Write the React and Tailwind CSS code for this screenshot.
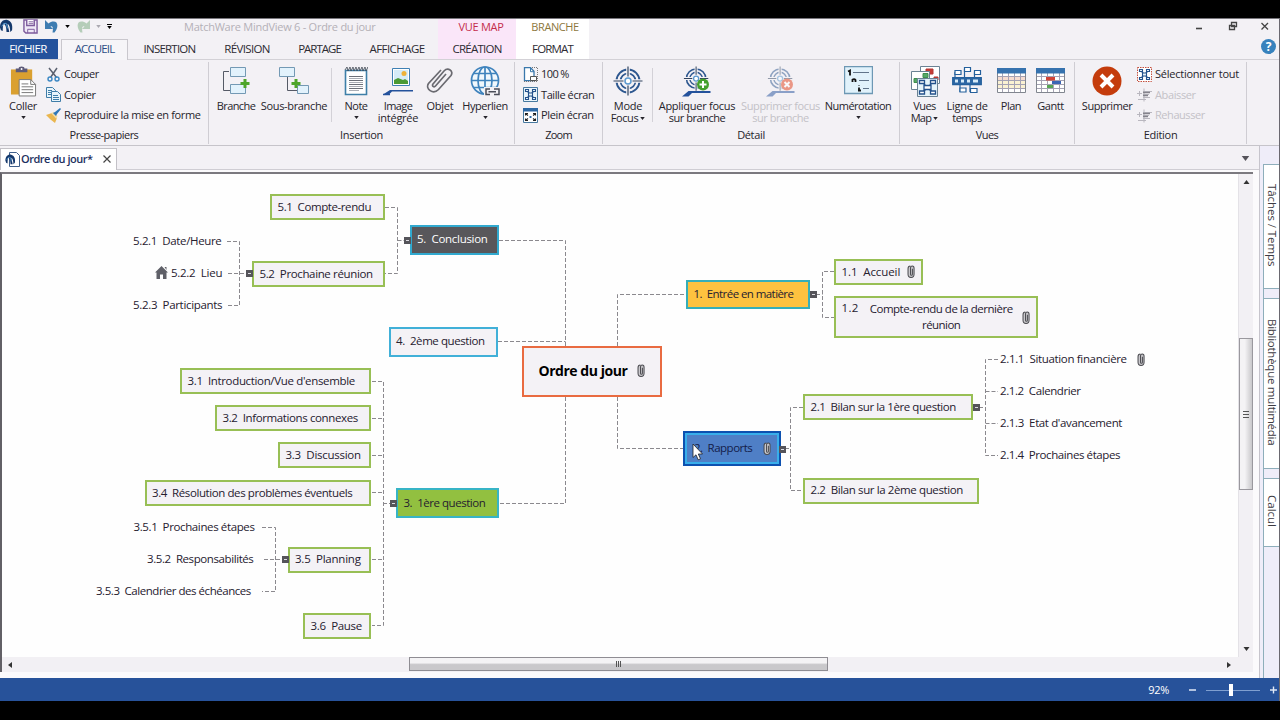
import { useLayoutEffect, useRef } from "react";
import clsx from "clsx";

// Text tracked so that it fills the given length (works for vertical text too)
function Txt({ w, className, children }) {
  const ref = useRef(null);

  useLayoutEffect(() => {
    const el = ref.current;
    el.style.letterSpacing = "0px";
    const length = Math.max(el.offsetWidth, el.offsetHeight);
    el.style.letterSpacing = `${(w - length) / children.length}px`;
  }, [w, children]);

  return (
    <span ref={ref} className={clsx("inline-block whitespace-pre", className)}>
      {children}
    </span>
  );
}

function Caret({ className }) {
  return (
    <svg viewBox="0 0 6 4" className={clsx("h-[3px] w-[5px] shrink-0", className)} fill="currentColor">
      <path d="M0 0h6L3 4z" />
    </svg>
  );
}

/* ---------- Icons ---------- */

function LogoIcon({ className }) {
  return (
    <svg viewBox="0 0 14 15" className={className}>
      <path d="M0 9C0 3 4 0 8 1c4 1 6 5 5 11l-2 2c0-5-1-8-3-9l2 9H7C7 9 6 6 4 5 3 7 3 10 3 13L1 12z" fill="#15386b" />
      <path d="M2 8c1-3 3-4 5-3l1 5" fill="none" stroke="#5aa0d8" strokeWidth="1" />
    </svg>
  );
}

function SaveIcon() {
  return (
    <svg viewBox="0 0 16 16" className="size-[15px]" fill="none" stroke="#7d5a9c" strokeWidth="1.5">
      <path d="M1 1h14v14H3l-2-2z" fill="#efe8f6" />
      <path d="M4 1v6h8V1" fill="#fff" />
      <path d="M5 15v-4h7v4M6 3h5M6 5h5" strokeWidth="1" />
    </svg>
  );
}

function UndoIcon({ className }) {
  return (
    <svg viewBox="0 0 13 13" className={className} fill="currentColor">
      <path d="M0 0v9h8L5.500 6.500c2-1 3 1 2 6l2 0c4-5 4-11-1-11-2 0-3 .5-5 2z" />
    </svg>
  );
}

function PasteIcon() {
  return (
    <svg viewBox="0 0 28 31" className="h-[31px] w-[27px]">
      <path d="M1 3h22v26H1z" fill="#daa030" />
      <path d="M6 2h3a3 2 0 0 1 6 0h3v4H6z" fill="#5d5a78" />
      <circle cx="12" cy="2.500" r="1" fill="#fff" />
      <path d="M9.500 13.500h12l5 5v12h-17z" fill="#fff" stroke="#777" />
      <path d="M21.500 13.500v5h5M12 18h7M12 21h12M12 24h12M12 27h12" fill="none" stroke="#777" />
    </svg>
  );
}

function CutIcon() {
  return (
    <svg viewBox="0 0 15 15" className="size-[15px]" fill="none">
      <path d="M3 1l7.500 9.500M11 1L4.500 10.500" stroke="#5b6170" strokeWidth="1.500" />
      <circle cx="4" cy="12" r="2" stroke="#3a87c4" strokeWidth="1.400" />
      <circle cx="11" cy="12" r="2" stroke="#3a87c4" strokeWidth="1.400" />
    </svg>
  );
}

function CopyIcon() {
  return (
    <svg viewBox="0 0 15 15" className="size-[15px]" fill="#e8f4fb" stroke="#3f7da8">
      <path d="M.5.500h6l3 3v7h-9z" />
      <path d="M2 3.500h4M2 5.500h4M2 7.500h3" />
      <path d="M5.500 4.500h6l3 3v7h-9z" />
      <path d="M7 8.500h5M7 10.500h6M7 12.500h6" />
    </svg>
  );
}

function BrushIcon() {
  return (
    <svg viewBox="0 0 15 15" className="size-[15px]">
      <path d="M0 7l6-2 5 5-2 5C6 13 3 10 0 7z" fill="#eab64e" />
      <path d="M5 5l3-1 3.500 4-1 3z" fill="#f3dca4" />
      <path d="M7 5l2-1 5-4 1 1-4 5-1 2z" fill="#2f78b8" />
    </svg>
  );
}

function BranchIcon() {
  return (
    <svg viewBox="0 0 28 30" className="h-[30px] w-[28px]" fill="#e2f2fc" stroke="#7399b4">
      <path d="M7 5.500H1.500v19H8" fill="none" stroke="#555a66" />
      <path d="M8.500 1.500h15v9h-15zM8.500 18.500h15v9h-15z" />
      <path d="M21.500 13h3v3h3v3h-3v3h-3v-3h-3v-3h3z" fill="#4ea52a" stroke="none" />
    </svg>
  );
}

function SubBranchIcon() {
  return (
    <svg viewBox="0 0 32 30" className="h-[30px] w-[32px]" fill="#e2f2fc" stroke="#7399b4">
      <path d="M9.500 10v14.500H19" fill="none" stroke="#555a66" />
      <path d="M1.500 1.500h15v9h-15zM19.500 19.500h11v8h-11z" />
      <path d="M16.500 13h3v3h3v3h-3v3h-3v-3h-3v-3h3z" fill="#4ea52a" stroke="none" />
    </svg>
  );
}

function NoteIcon() {
  return (
    <svg viewBox="0 0 24 30" className="h-[30px] w-[24px]">
      <path d="M1.500 4.500h21v24h-21z" fill="#fff" stroke="#3e7fa8" strokeWidth="1.600" />
      <path d="M1 4l2-3 1 4 2-4 1 4 2-4 1 4 2-4 1 4 2-4 1 4 2-4 1 4 2-4 1 4 2-4 1 3" fill="none" stroke="#3d4652" strokeWidth=".8" />
      <path d="M5 10.500h14M5 14.500h14M5 18.500h14M5 22.500h14" stroke="#6b6f78" strokeWidth="1.100" />
      <path d="M5 12.500h14M5 16.500h14M5 20.500h14M5 24.500h10" stroke="#aaadb5" strokeWidth="1" />
    </svg>
  );
}

function ImageIcon() {
  return (
    <svg viewBox="0 0 30 30" className="size-[30px]">
      <path d="M9.500 2.500h17v17h-17z" fill="#fff" stroke="#3f80b4" />
      <path d="M11 4h14v14H11z" fill="#d5ecf8" />
      <path d="M11 14l4-2 5 2 2-1 3 2v3H11z" fill="#4a9a35" />
      <circle cx="21" cy="7.500" r="2.500" fill="#edb23a" />
      <path d="M0 28.500l7-4.500h23v1.500H9l-3 3z" fill="#24529c" />
      <path d="M0 28.500h7" stroke="#24529c" strokeWidth="1.500" />
    </svg>
  );
}

function ClipIcon() {
  return (
    <svg viewBox="0 0 28 28" className="h-[28px] w-[28px]" fill="none" stroke="#6a6a70" strokeWidth="1.700">
      <path d="M20 8L9.500 20c-1.500 1.700-4 0-2.500-2L18 5c4-4 10 0 7 4.500L12.500 23.500C7 29-1 23 2.500 17.500L15 4" />
    </svg>
  );
}

function GlobeIcon() {
  return (
    <svg viewBox="0 0 30 31" className="h-[31px] w-[30px]" fill="none" stroke="#3f83bd" strokeWidth="1.700">
      <circle cx="15" cy="14.500" r="13.500" fill="#f0f8fd" />
      <ellipse cx="15" cy="14.500" rx="7" ry="13.500" />
      <path d="M15 1v27M2 14.500h26M4 7.500h22M4 21.500h22" />
      <path d="M14 21h16v10H14z" fill="#f3f1f5" stroke="none" />
      <path d="M20 23h-4v5.500h4M24 23h5v5.500h-5M18.500 25.700h7.500" stroke="#4b4e59" strokeWidth="1.500" />
    </svg>
  );
}

function PageIcon() {
  return (
    <svg viewBox="0 0 15 15" className="size-[15px]" fill="none">
      <path d="M1.500.700h6l3.500 3.500v9.500H1.500z" fill="#fff" stroke="#3a78ac" strokeWidth="1.300" />
      <path d="M7.500.700v4H11" stroke="#3a78ac" />
      <path d="M9 .500h5.500v14H1" stroke="#777" strokeDasharray="1 1" />
      <path d="M7.500 9.500h6v4h-6z" fill="#fff" stroke="#555" />
    </svg>
  );
}

function MiniMap() {
  return (
    <g fill="#e8f4fb" stroke="#24528c" strokeWidth="1.100">
      <path d="M4 4l7 7M11 4l-7 7" />
      <path d="M2.500 2.500h3v2h-3zM9.500 2.500h3v2h-3zM2.500 10.500h3v2h-3zM9.500 10.500h3v2h-3zM5.500 6h4v3h-4z" />
    </g>
  );
}

function FitIcon() {
  return (
    <svg viewBox="0 0 15 15" className="size-[15px]">
      <path d="M.5.500h14v14H.5z" fill="#eaf5fb" stroke="#47799f" />
      <MiniMap />
    </svg>
  );
}

function SelectAllIcon() {
  return (
    <svg viewBox="0 0 15 15" className="size-[15px]">
      <path d="M.5.500h14v14H.5z" fill="#fff" stroke="#c4503e" strokeDasharray="1.500 1" />
      <MiniMap />
    </svg>
  );
}

function FullScreenIcon() {
  return (
    <svg viewBox="0 0 15 15" className="size-[15px]">
      <path d="M.5.500h14v14H.5z" fill="#fff" stroke="#47799f" />
      <path d="M0 0h15v3.500H0z" fill="#2d69a6" />
      <path d="M2.500 7.500v-2H5M10 5.500h2.500v2M12.500 10.500v2H10M5 12.500H2.500v-2M3 6l2 1.500M12 6l-2 1.500M3 12l2-1.500M12 12l-2-1.500" fill="none" stroke="#222" strokeWidth="1.100" />
      <path d="M6.500 8h2v2h-2z" fill="#2d69a6" />
    </svg>
  );
}

function Target() {
  return (
    <>
      <g fill="none" stroke="#2d578f" strokeWidth="1.900">
        <circle cx="15" cy="15" r="11.500" />
        <circle cx="15" cy="15" r="7.500" strokeWidth="1.700" />
      </g>
      <path d="M15 0v11M15 19v11M0 15h11M19 15h11" stroke="#f3f1f5" strokeWidth="3.600" />
      <path d="M15 .500v10M15 19.500v10M.5 15h10M19.500 15h10" stroke="#30445f" strokeWidth="1.200" />
      <circle cx="15" cy="15" r="3" fill="#fff" stroke="#5b98cf" strokeWidth="1.500" />
    </>
  );
}

function FocusIcon() {
  return (
    <svg viewBox="0 0 30 30" className="size-[30px]">
      <Target />
    </svg>
  );
}

function FocusBranchIcon({ remove }) {
  return (
    <svg viewBox="0 0 30 31" className={clsx("h-[31px] w-[30px]", remove && "opacity-50")}>
      <g transform="translate(1.500 0) scale(.84)">
        <Target />
      </g>
      <path d="M0 30.500l6.500-5.500h22v2H10l-3.500 3.500z" fill="#24529c" />
      <circle cx="21" cy="18.500" r="6" fill={remove ? "#e2401a" : "#43a02c"} />
      <path
        d={remove ? "M18.500 16l5 5M23.500 16l-5 5" : "M21 15v7M17.500 18.500h7"}
        stroke="#fff"
        strokeWidth="2"
      />
    </svg>
  );
}

function NumberingIcon() {
  return (
    <svg viewBox="0 0 29 29" className="size-[29px]">
      <path d="M.5.500h28v27H.5z" fill="#e1f2fb" stroke="#6d98b4" strokeWidth="1.400" />
      <path d="M4 5.500l2-1v5M8.500 16v-3M11.500 16v-2q-1-1.500-3-.500M15 21.500v3M14 24.500h3M15 19.500v.5" fill="none" stroke="#111" strokeWidth="1.800" />
      <path d="M9 6.500h16M15 14.500h10M19 22.500h6" stroke="#60748a" />
    </svg>
  );
}

function MapViewsIcon() {
  return (
    <svg viewBox="0 0 30 31" className="h-[31px] w-[30px]" fill="#fff" stroke="#6a8294">
      <path d="M10.500.500h19v17h-19z" />
      <path d="M16 3h7v5h-7zM24 11h4v3h-4z" fill="#c43a35" stroke="#b23732" />
      <path d="M1.500 5.500h18v18h-18z" />
      <path d="M13 7.500h5v4h-5zM4 12.500h5v4H4z" fill="#55a867" stroke="#3f8d4f" />
      <path d="M7.500 12.500h20v18h-20z" fill="#e6f4fb" />
      <g fill="#fff" stroke="#24528c" strokeWidth="1.300">
        <path d="M12 16l11 11M23 16L12 27" />
        <path d="M9.500 14.500h5v3h-5zM20.500 14.500h5v3h-5zM9.500 25h5v3h-5zM20.500 25h5v3h-5zM14 19.500h7v4h-7z" />
      </g>
    </svg>
  );
}

function TimelineIcon() {
  return (
    <svg viewBox="0 0 30 28" className="h-[28px] w-[30px]" fill="#fff" stroke="#24609c" strokeWidth="1.200">
      <path d="M3 6v6M12.500 3v9M22.500 6v6M8 16v10M18 16v10" />
      <path d="M3 4.500h6v4H3zM12.500 1.500h6v4h-6zM22.500 4.500h6v4h-6zM8 22h6v4H8zM18.500 22.500h6.500v4h-6.500z" />
      <path d="M.7 11.700h28.600v7H.7z" fill="#2d67a4" />
      <path d="M3 13.500h3v3H3zM9 13.500h3v3H9zM15 13.500h3v3h-3zM21 13.500h5v3h-5z" fill="#d6ebf8" stroke="none" />
    </svg>
  );
}

function TableIcon({ gantt }) {
  return (
    <svg viewBox="0 0 29 26" className="h-[26px] w-[29px]">
      <path d="M.5.500h28v24H.5z" fill="#fff" stroke="#81868f" />
      {!gantt && <path d="M1 8h27v5H1z" fill="#f7dcd0" />}
      {!gantt && <path d="M1 13h27v7H1z" fill="#faf1d2" />}
      <path d="M1 8.500h27M1 12.500h27M1 16.500h27M1 20.500h27M5.500 5v19M11.500 5v19M17.500 5v19M23.500 5v19" stroke="#a5a2b4" />
      <path d="M0 0h29v5.500H0z" fill="#3672ae" />
      {gantt && <path d="M10 9h9v3.500h-9z" fill="#d04437" />}
      {gantt && <path d="M16 13h9v3h-9z" fill="#3b64b4" />}
      {gantt && <path d="M11 17h6v3h-6z" fill="#58a553" />}
    </svg>
  );
}

function DeleteIcon() {
  return (
    <svg viewBox="0 0 30 30" className="size-[30px]">
      <circle cx="15" cy="15" r="14.500" fill="#c43c0c" />
      <path d="M9 9l12 12M21 9L9 21" stroke="#fff" strokeWidth="4" />
    </svg>
  );
}

function IndentIcon() {
  return (
    <svg viewBox="0 0 15 15" className="size-[15px]" fill="none" stroke="#b9b7bf">
      <path d="M0 6.500h5M2.500 4v5M6 4.500h9M6 7.500h6M6 10.500h7M1 12.500h8M7 1.500v13" />
      <path d="M6 5.500h7M6 8.500h5" stroke="#85838c" strokeWidth="1.300" />
    </svg>
  );
}

function Attachment() {
  return (
    <svg viewBox="0 0 8 14" className="h-[13px] w-[8px] shrink-0" fill="#c9c8cc" stroke="#4b4b50" strokeWidth="1.100">
      <path d="M5.500 4v6c0 1.500-2 1.500-2 0V3.500C3.500.200 7.300.200 7.300 3.500v6.500c0 4.500-6.500 4.500-6.500 0V4c0-2 1-3 2.500-3" />
    </svg>
  );
}

/* ---------- Ribbon ---------- */

const tabs = [
  { label: "INSERTION", w: 52, cell: "w-[83px]" },
  { label: "RÉVISION", w: 46, cell: "w-[72px]" },
  { label: "PARTAGE", w: 43, cell: "w-[73px]" },
  { label: "AFFICHAGE", w: 55, cell: "w-[82px]" },
];

function TitleBar() {
  return (
    <div className="flex h-[20px] items-start">
      <div className="flex w-[184px] items-start">
        <LogoIcon className="h-[14px] w-[13px]" />
        <span className="ml-[10px]"><SaveIcon /></span>
        <UndoIcon className="mt-px ml-[7px] h-[13px] w-[13px] text-[#3e7cb1]" />
        <Caret className="mt-[6px] ml-[7px]" />
        <UndoIcon className="mt-px ml-[7px] h-[13px] w-[13px] -scale-x-100 text-[#b5cdb9]" />
        <Caret className="mt-[6px] ml-[6px] text-[#aaa8b0]" />
        <div className="mt-[5px] ml-[6px] flex flex-col gap-px">
          <span className="h-px w-[5px] bg-black"></span>
          <Caret />
        </div>
      </div>
      <Txt w={192} className="text-[11px] leading-[16px] text-[#b3b0b7]">MatchWare MindView 6 - Ordre du jour</Txt>
      <div className="ml-auto flex w-[841px] items-start">
        <div className="flex h-[20px] w-[78px] justify-center bg-[#fae6f9] pl-[8px]">
          <Txt w={45} className="text-[11px] leading-[16px] text-[#c42c4c]">VUE MAP</Txt>
        </div>
        <div className="flex h-[20px] w-[73px] justify-center bg-white pl-[5px]">
          <Txt w={47} className="text-[11px] leading-[16px] text-[#8d783e]">BRANCHE</Txt>
        </div>
        <div className="ml-auto flex items-start pr-[10px] text-[#444]">
          <svg viewBox="0 0 74 14" className="h-[14px] w-[74px]" fill="none" stroke="currentColor" strokeWidth="1.300">
            <path d="M1 9.500h6" strokeWidth="1.600" />
            <path d="M36.500 3.500h5v4h-5zM34.500 6.500h5v4h-5z" fill="#f3f1f5" />
            <path d="M66.500 4l6.500 6.500M73 4l-6.500 6.500" />
          </svg>
        </div>
      </div>
    </div>
  );
}

function TabRow() {
  return (
    <div className="flex h-[21px] items-stretch border-b border-[#d3d1d6] text-[11.500px] leading-[20px] text-[#2d2b33]">
      <div className="flex w-[58px] justify-center bg-[#24529c] pr-[2px]">
        <Txt w={38} className="text-white">FICHIER</Txt>
      </div>
      <div className="ml-[3px] -mb-px flex w-[67px] justify-center border border-b-0 border-[#c9c7cd] bg-[#f6f5f8] leading-[18px] text-[#2b4d86]">
        <Txt w={40}>ACCUEIL</Txt>
      </div>
      {tabs.map((tab) => (
        <div key={tab.label} className={clsx("flex justify-center", tab.cell)}>
          <Txt w={tab.w}>{tab.label}</Txt>
        </div>
      ))}
      <div className="flex w-[78px] justify-center bg-[#fae6f9]">
        <Txt w={49}>CRÉATION</Txt>
      </div>
      <div className="flex w-[73px] justify-center bg-white">
        <Txt w={41}>FORMAT</Txt>
      </div>
      <div className="ml-auto flex w-[18px] items-start">
        <div className="flex size-[15px] items-center justify-center rounded-full bg-[#3782bd] text-[12px] leading-none font-bold text-white">?</div>
      </div>
    </div>
  );
}

function Group({ label, w, className, rowClass, children }) {
  return (
    <div className={clsx("mt-[2px] flex h-[82px] flex-col items-center border-r border-[#cfcdd3]", className)}>
      <div className={clsx("flex h-[65px] w-full", rowClass)}>{children}</div>
      <Txt w={w} className="text-[11px] leading-[16px]">{label}</Txt>
    </div>
  );
}

// lines: [text, width] pairs under the icon
function BigButton({ icon, lines, caret, inlineCaret, disabled, className }) {
  return (
    <div className={clsx("flex shrink-0 flex-col items-center pt-[4px]", disabled && "text-[#c3c1c7]", className)}>
      <div className="flex h-[34px] items-start justify-center">{icon}</div>
      {lines.map(([text, w], i) => (
        <div key={text} className="flex items-center gap-[2px] text-[11px] leading-[12px]">
          <Txt w={w}>{text}</Txt>
          {inlineCaret && i === lines.length - 1 && <Caret />}
        </div>
      ))}
      {caret && <Caret className="mt-[4px]" />}
    </div>
  );
}

function SmallButton({ icon, label, w, disabled }) {
  return (
    <div className={clsx("flex h-[20.500px] items-center gap-[3px] text-[11px] leading-[16px]", disabled && "text-[#c3c1c7]")}>
      {icon}
      <Txt w={w}>{label}</Txt>
    </div>
  );
}

function Divider() {
  return <div className="mx-[2px] mt-[6px] h-[54px] w-px shrink-0 bg-[#d3d1d7]"></div>;
}

function Ribbon() {
  return (
    <div className="flex h-[86px] border-b border-[#c6c4ca] text-[#26242b]">
      <Group label="Presse-papiers" w={69} className="w-[209px]">
        <BigButton className="w-[46px]" icon={<PasteIcon />} lines={[["Coller", 28]]} caret />
        <div className="pt-[2px]">
          <SmallButton icon={<CutIcon />} label="Couper" w={35} />
          <SmallButton icon={<CopyIcon />} label="Copier" w={32} />
          <SmallButton icon={<BrushIcon />} label="Reproduire la mise en forme" w={137} />
        </div>
      </Group>
      <Group label="Insertion" w={43} className="w-[306px]" rowClass="pl-[4px]">
        <BigButton className="w-[46px]" icon={<BranchIcon />} lines={[["Branche", 39]]} />
        <BigButton className="w-[70px]" icon={<SubBranchIcon />} lines={[["Sous-branche", 66]]} />
        <Divider />
        <BigButton className="ml-px w-[42px]" icon={<NoteIcon />} lines={[["Note", 23]]} caret />
        <BigButton className="w-[42px]" icon={<ImageIcon />} lines={[["Image", 29], ["intégrée", 40]]} />
        <BigButton className="w-[42px]" icon={<ClipIcon />} lines={[["Objet", 27]]} />
        <BigButton className="w-[48px]" icon={<GlobeIcon />} lines={[["Hyperlien", 46]]} caret />
      </Group>
      <Group label="Zoom" w={27} className="w-[88px]">
        <div className="pt-[2px] pl-[8px]">
          <SmallButton icon={<PageIcon />} label="100 %" w={28} />
          <SmallButton icon={<FitIcon />} label="Taille écran" w={53} />
          <SmallButton icon={<FullScreenIcon />} label="Plein écran" w={53} />
        </div>
      </Group>
      <Group label="Détail" w={28} className="w-[297px]" rowClass="pl-[3px]">
        <BigButton className="w-[44px]" icon={<FocusIcon />} lines={[["Mode", 28], ["Focus", 28]]} inlineCaret />
        <Divider />
        <BigButton className="w-[84px]" icon={<FocusBranchIcon />} lines={[["Appliquer focus", 77], ["sur branche", 57]]} />
        <BigButton className="w-[83px]" icon={<FocusBranchIcon remove />} lines={[["Supprimer focus", 79], ["sur branche", 57]]} disabled />
        <BigButton className="w-[72px]" icon={<NumberingIcon />} lines={[["Numérotation", 67]]} caret />
      </Group>
      <Group label="Vues" w={23} className="w-[175px]" rowClass="pl-[3px]">
        <BigButton className="w-[43px]" icon={<MapViewsIcon />} lines={[["Vues", 23], ["Map", 21]]} inlineCaret />
        <BigButton className="w-[42px]" icon={<TimelineIcon />} lines={[["Ligne de", 41], ["temps", 29]]} />
        <BigButton className="ml-[2px] w-[42px]" icon={<div className="pt-[2px]"><TableIcon /></div>} lines={[["Plan", 20]]} />
        <BigButton className="w-[37px]" icon={<div className="pt-[2px]"><TableIcon gantt /></div>} lines={[["Gantt", 27]]} />
      </Group>
      <Group label="Edition" w={34} className="w-[172px]">
        <BigButton className="ml-[6px] w-[52px]" icon={<DeleteIcon />} lines={[["Supprimer", 50]]} />
        <div className="pt-[2px] pl-[4px]">
          <SmallButton icon={<SelectAllIcon />} label="Sélectionner tout" w={84} />
          <SmallButton icon={<IndentIcon />} label="Abaisser" w={41} disabled />
          <SmallButton icon={<IndentIcon />} label="Rehausser" w={50} disabled />
        </div>
      </Group>
    </div>
  );
}

/* ---------- Mind map ---------- */

const GREEN = "border-2 border-[#98bf55] bg-[#f4f2f6]";

// x, y are window coordinates; the canvas starts at (2, 174)
const nodes = [
  { text: "5.1  Compte-rendu", x: 270, y: 194, width: 115, height: 26, tw: 94, style: GREEN },
  { text: "5.2  Prochaine réunion", x: 252, y: 261, width: 133, height: 26, tw: 113, style: GREEN },
  { text: "5.  Conclusion", x: 409.5, y: 225, width: 89, height: 29.5, tw: 71, style: "border-2 border-[#31a9cf] bg-[#58575b] text-white" },
  { text: "4.  2ème question", x: 388.5, y: 327, width: 109.5, height: 29.5, tw: 89, style: "border-2 border-[#41b0d8] bg-[#f4f2f6]" },
  { text: "3.1  Introduction/Vue d'ensemble", x: 180, y: 368, width: 191, height: 26, tw: 167, style: GREEN },
  { text: "3.2  Informations connexes", x: 215, y: 405, width: 156, height: 26, tw: 135, style: GREEN },
  { text: "3.3  Discussion", x: 278, y: 442, width: 93, height: 26, tw: 75, style: GREEN },
  { text: "3.4  Résolution des problèmes éventuels", x: 144.5, y: 480, width: 226.5, height: 26, tw: 200, style: GREEN },
  { text: "3.5  Planning", x: 287.5, y: 546.5, width: 83.5, height: 26, tw: 66, style: GREEN },
  { text: "3.6  Pause", x: 303, y: 613, width: 68, height: 26, tw: 51, style: GREEN },
  { text: "3.  1ère question", x: 396, y: 488, width: 103, height: 30, tw: 82, style: "border-2 border-[#37b4c6] bg-[#92c040]" },
  { text: "1.  Entrée en matière", x: 686, y: 280, width: 124, height: 29, tw: 100, style: "border-2 border-[#35aeb8] bg-[#fdc23f]" },
  { text: "1.1  Accueil", x: 834, y: 259, width: 89, height: 26, tw: 59, style: GREEN, clip: true },
  { text: "2.1  Bilan sur la 1ère question", x: 803, y: 394, width: 170, height: 26, tw: 146, style: GREEN },
  { text: "2.2  Bilan sur la 2ème question", x: 803, y: 477.5, width: 176, height: 26, tw: 152, style: GREEN },
];

const leaves = [
  { text: "5.2.1  Date/Heure", x: 133, y: 241, tw: 88 },
  { text: "5.2.2  Lieu", x: 171, y: 273, tw: 51 },
  { text: "5.2.3  Participants", x: 133, y: 305, tw: 89 },
  { text: "3.5.1  Prochaines étapes", x: 133.5, y: 526.5, tw: 121 },
  { text: "3.5.2  Responsabilités", x: 147, y: 558.5, tw: 106 },
  { text: "3.5.3  Calendrier des échéances", x: 96, y: 590.5, tw: 155 },
  { text: "2.1.1  Situation financière", x: 1000, y: 359, tw: 127, clip: true },
  { text: "2.1.2  Calendrier", x: 1000, y: 391, tw: 81 },
  { text: "2.1.3  Etat d'avancement", x: 1000, y: 423, tw: 122 },
  { text: "2.1.4  Prochaines étapes", x: 1000, y: 455, tw: 120 },
];

const links = [
  "M385 207.500H397.500V273.500H385M397.500 240.500H404",
  "M227 241.500H239.500V305.500H227M228 273.500H248",
  "M499 240.500H565.500V347M498 341.500H565.500M565.500 397V503.500H499",
  "M617.500 346V294.500H686M617.500 397V448.500H683",
  "M372 381.500H383.500V625.500H372M372 418.500H383M372 455.500H383M372 492.500H383M372 559.500H383M383 503.500H390",
  "M262 527.500H275.500V591.500H262M264 559.500H282",
  "M816 294.500H822.500M834 271.500H822.500V317.500H834",
  "M785 448.500H790.500M803 407.500H790.500V490.500H803",
  "M979 407.500H985.500M998 359.500H985.500V455.500H998M985.500 391.500H998M985.500 423.500H998",
];

const toggles = [[404, 237], [246, 270], [390, 500], [282, 556], [810, 291], [973, 404]];

function Toggle({ x, y }) {
  return (
    <div
      className="absolute flex h-[7px] w-[7px] items-center justify-center bg-[#55545a]"
      style={{ left: x - 2, top: y - 174 }}
    >
      <span className="h-px w-[3px] bg-[#dddce2]"></span>
    </div>
  );
}

function MapCanvas() {
  return (
    <div className="relative min-w-0 flex-1 overflow-hidden bg-[#fefefe] text-[11.500px] leading-[16px] text-[#26202f]">
      <svg viewBox="2 174 1236 482" className="absolute top-0 left-0 h-[482px] w-[1236px]" fill="none" stroke="#8b898e" strokeDasharray="4 2">
        {links.map((d) => (
          <path key={d} d={d} />
        ))}
      </svg>

      {nodes.map((n) => (
        <div
          key={n.text}
          className={clsx("absolute flex items-center pl-[5.500px] pb-px", n.style)}
          style={{ left: n.x - 2, top: n.y - 174, width: n.width, height: n.height }}
        >
          <Txt w={n.tw}>{n.text}</Txt>
          {n.clip && <span className="ml-[7px]"><Attachment /></span>}
        </div>
      ))}

      {leaves.map((l) => (
        <div
          key={l.text}
          className="absolute flex items-center"
          style={{ left: l.x - 2, top: l.y - 182 }}
        >
          <Txt w={l.tw}>{l.text}</Txt>
          {l.clip && <span className="ml-[10px]"><Attachment /></span>}
        </div>
      ))}

      {/* Home marker of 5.2.2 */}
      <svg viewBox="0 0 13 13" className="absolute top-[92px] left-[153px] size-[13px]" fill="#5f6068">
        <path d="M6.500 0L13 6.500h-1.500V13H8V8.500H5V13H1.500V6.500H0zM9.500 1h2v3z" />
      </svg>

      {/* Root */}
      <div className="absolute top-[172px] left-[520px] flex h-[51px] w-[140px] items-center border-2 border-[#e96b41] bg-[#f4f2f6] pb-[2px] pl-[14.500px] text-[14px] font-bold text-black">
        <Txt w={89}>Ordre du jour</Txt>
        <span className="ml-[10px]"><Attachment /></span>
      </div>

      {/* 1.2 wraps on two lines */}
      <div className="absolute top-[122px] left-[832px] flex h-[42px] w-[204px] items-center border-2 border-[#98bf55] bg-[#f4f2f6] pl-[5.500px]">
        <div className="self-start pt-[2px]">
          <Txt w={17}>1.2</Txt>
        </div>
        <div className="ml-[11px] flex w-[143px] flex-col items-center pb-px">
          <Txt w={143}>Compte-rendu de la dernière</Txt>
          <Txt w={38}>réunion</Txt>
        </div>
        <span className="ml-[9px]"><Attachment /></span>
      </div>

      {toggles.map(([x, y]) => (
        <Toggle key={`${x}-${y}`} x={x} y={y} />
      ))}

      {/* Selected branch */}
      <div className="absolute top-[257px] left-[681px] flex h-[35px] w-[98px] border-2 border-[#0d51b0]">
        <div className="flex flex-1 items-center border-2 border-[#39aeea] bg-[#4f7fc6] pb-px pl-[7px]">
          <Txt w={58} className="text-[#14204a]">2.  Rapports</Txt>
          <span className="ml-[11px]"><Attachment /></span>
        </div>
      </div>
      <Toggle x={779} y={446} />

      {/* Mouse pointer */}
      <svg viewBox="0 0 12 18" className="absolute top-[269px] left-[690px] h-[18px] w-[12px]">
        <path d="M1 1v13.500l3-2.700 2.200 5 2.300-1-2.200-4.800h4.200z" fill="#fff" stroke="#222" strokeWidth=".8" />
      </svg>
    </div>
  );
}

function VerticalScrollbar() {
  return (
    <div className="flex w-[15px] flex-col items-center border-l border-[#e4e2e7] bg-[#f2f0f4] text-[#333]">
      <Caret className="mt-[6px] h-[4px] w-[7px] rotate-180" />
      <div className="mt-[154px] flex h-[152px] w-[14px] flex-col items-center justify-center gap-[2px] border border-[#9a989e] bg-gradient-to-r from-[#f4f3f5] from-40% to-[#c9c8cb]">
        <span className="h-px w-[6px] bg-[#555]"></span>
        <span className="h-px w-[6px] bg-[#555]"></span>
        <span className="h-px w-[6px] bg-[#555]"></span>
      </div>
      <Caret className="mt-auto mb-[6px] h-[4px] w-[7px]" />
    </div>
  );
}

function HorizontalScrollbar() {
  return (
    <div className="flex h-[15px] items-center bg-[#f2f0f4] text-[#333]">
      <div className="flex w-[407px] pl-[5px]">
        <Caret className="h-[4px] w-[6px] rotate-90" />
      </div>
      <div className="flex h-[14px] w-[419px] items-center justify-center gap-px self-start border border-[#8f8d93] bg-gradient-to-b from-[#f4f3f5] from-40% to-[#c9c8cb] to-55%">
        <span className="h-[6px] w-px bg-[#555]"></span>
        <span className="h-[6px] w-px bg-[#555]"></span>
        <span className="h-[6px] w-px bg-[#555]"></span>
      </div>
      <Caret className="mr-[21px] ml-auto h-[4px] w-[6px] -rotate-90" />
    </div>
  );
}

function DocumentTabs() {
  return (
    <div className="flex h-[24px] items-end border-b border-[#cfcdd3]">
      <div className="-mb-px flex h-[22px] w-[117px] items-center border border-b-0 border-[#c3c1c7] bg-white pb-px pl-[4px]">
        <div className="relative h-[15px] w-[15px]">
          <svg viewBox="0 0 15 15" className="size-[15px]" fill="#fff" stroke="#3f5f8a">
            <path d="M4.500.500h7l3 3v11h-10z" />
          </svg>
          <LogoIcon className="absolute top-[2px] left-0 h-[11px] w-[11px]" />
        </div>
        <Txt w={71} className="ml-px text-[11px] leading-[16px] font-semibold text-[#1d3060]">Ordre du jour*</Txt>
        <svg viewBox="0 0 8 8" className="ml-[11px] size-[8px]" stroke="#444" strokeWidth="1.200">
          <path d="M.5.500l7 7M7.500.500l-7 7" />
        </svg>
      </div>
      <Caret className="mr-[9px] mb-[8px] ml-auto h-[5px] w-[9px] text-[#55535a]" />
    </div>
  );
}

function SideTab({ label, w, className }) {
  return (
    <div className={clsx("flex items-center justify-center border-y border-[#8eaebb] bg-white pb-[3px] pl-px", className)}>
      <Txt w={w} className="text-[11.500px] leading-[14px] text-[#3c3a42] [writing-mode:vertical-rl]">{label}</Txt>
    </div>
  );
}

function StatusBar() {
  return (
    <div className="flex h-[23px] items-center justify-end bg-[#27529a] text-white">
      <Txt w={21} className="mr-[19px] text-[11px] leading-[16px]">92%</Txt>
      <svg viewBox="0 0 91 14" className="h-[14px] w-[91px]" stroke="#dfe8f6">
        <path d="M1 7h7M82 7h7M85.500 3.500v7" strokeWidth="1.400" />
        <path d="M18 7.500h54" stroke="#7f9fd0" />
        <path d="M41 1h4v12h-4z" fill="#fff" stroke="none" />
      </svg>
    </div>
  );
}

export default function App() {
  return (
    <div className="flex h-[720px] w-[1280px] flex-col overflow-hidden bg-black pt-[18px] font-['Open_Sans',sans-serif]">
      <div className="flex h-[683px] flex-col border-t border-r border-t-[#77757b] border-r-[#6a6870] bg-[#f3f1f5]">
        <TitleBar />
        <TabRow />
        <Ribbon />
        <div className="flex h-[532px]">
          <div className="flex w-[1260px] shrink-0 flex-col border-r border-[#c6c4cc]">
            <DocumentTabs />
            <div className="flex min-h-0 flex-1 flex-col bg-[#fbfafc] pt-[2px] pr-[6px] pb-[6px]">
              <div className="flex min-h-0 flex-1 flex-col border-t-2 border-l-2 border-t-[#7b797f] border-l-[#626066]">
                <div className="flex h-[483px]">
                  <MapCanvas />
                  <VerticalScrollbar />
                </div>
                <HorizontalScrollbar />
              </div>
            </div>
          </div>
          <div className="flex min-w-0 flex-1 flex-col bg-[#efedf9] pl-[3px]">
            <div className="mt-[18px] flex flex-1 flex-col gap-[9px] border-l border-[#8eaebb]">
              <SideTab label="Tâches / Temps" w={82} className="h-[125px]" />
              <SideTab label="Bibliothèque multimédia" w={126} className="h-[171px]" />
              <SideTab label="Calcul" w={32} className="h-[69px]" />
            </div>
          </div>
        </div>
        <StatusBar />
      </div>
    </div>
  );
}
